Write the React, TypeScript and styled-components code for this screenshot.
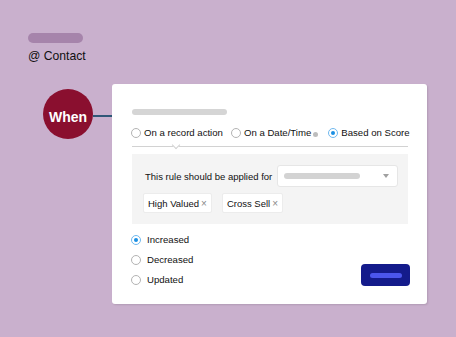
import React from "react";
import styled, { createGlobalStyle } from "styled-components";

const Global = createGlobalStyle`
  html, body { margin: 0; padding: 0; background: #c9b0cd; }
  body { font-family: "Liberation Sans", Arial, sans-serif; color: #111; }
`;

const Page = styled.div`
  width: 456px;
  height: 337px;
  box-sizing: border-box;
  padding: 33px 28px 0 28px;
  background: #c9b0cd;
`;

const Header = styled.div`
  display: flex;
  flex-direction: column;
  align-items: flex-start;
`;

const Pill = styled.div`
  width: 55px;
  height: 10px;
  border-radius: 5px;
  background: #a684ab;
`;

const Label = styled.div`
  margin-top: 6px;
  font-size: 12.2px;
  line-height: 14px;
  color: #111;
`;

const FlowRow = styled.div`
  display: flex;
  align-items: flex-start;
  margin-top: 21px;
  padding-left: 15px;
`;

const Trigger = styled.div`
  width: 50px;
  height: 50px;
  margin-top: 5px;
  border-radius: 50%;
  background: #8a0f2f;
  color: #fff;
  font-weight: 700;
  font-size: 14px;
  display: flex;
  align-items: center;
  justify-content: center;
  box-sizing: border-box;
  padding-top: 6px;
  flex: none;
`;

const Connector = styled.div`
  width: 19px;
  height: 2px;
  margin-top: 31px;
  background: #2f5777;
  flex: none;
`;

const Card = styled.div`
  width: 315px;
  height: 220px;
  box-sizing: border-box;
  background: #fff;
  border-radius: 3px;
  box-shadow: 1px 1px 2px rgba(0, 0, 0, 0.12);
  padding: 25px 19px 0 20px;
  display: flex;
  flex-direction: column;
`;

const TitleBar = styled.div`
  width: 95px;
  height: 6px;
  border-radius: 3px;
  background: #d5d5d5;
`;

const ModeRow = styled.div`
  display: flex;
  align-items: center;
  height: 14px;
  margin-top: 11px;
  margin-left: -1px;
  gap: 8px;
`;

const Option = styled.label<{ $gap?: number }>`
  display: flex;
  align-items: center;
  gap: ${(p) => p.$gap ?? 3}px;
  font-size: 9.6px;
  line-height: 12px;
  color: #111;
  white-space: nowrap;
`;

const Radio = styled.span<{ $on?: boolean }>`
  width: 10px;
  height: 10px;
  box-sizing: border-box;
  border-radius: 50%;
  border: 1px solid ${(p) => (p.$on ? "#6fb8ee" : "#b3b3b3")};
  background: #fff;
  display: flex;
  align-items: center;
  justify-content: center;
  flex: none;
  &::after {
    content: "";
    width: 4px;
    height: 4px;
    border-radius: 50%;
    background: #1a8fe3;
    display: ${(p) => (p.$on ? "block" : "none")};
  }
`;

const InfoDot = styled.span`
  width: 5px;
  height: 5px;
  border-radius: 50%;
  background: #bdbdbd;
  margin-left: -1px;
  margin-right: 2px;
  margin-top: 3px;
  flex: none;
`;

const Divider = styled.div`
  position: relative;
  height: 1px;
  margin-top: 6px;
  background: #d2d2d2;
  &::after {
    content: "";
    position: absolute;
    left: 41px;
    top: -4px;
    width: 5px;
    height: 5px;
    background: #fff;
    border-right: 1px solid #d2d2d2;
    border-bottom: 1px solid #d2d2d2;
    transform: rotate(45deg);
  }
`;

const Panel = styled.div`
  margin-top: 7px;
  height: 70px;
  box-sizing: border-box;
  background: #f4f4f4;
  padding: 11px 10px 0 11px;
  display: flex;
  flex-direction: column;
  gap: 6px;
`;

const RuleRow = styled.div`
  display: flex;
  align-items: center;
  justify-content: space-between;
`;

const RuleText = styled.span`
  font-size: 9.5px;
  color: #111;
  padding-left: 2px;
`;

const Select = styled.div`
  width: 121px;
  height: 22px;
  box-sizing: border-box;
  background: #fff;
  border: 1px solid #e6e6e6;
  border-radius: 3px;
  display: flex;
  align-items: center;
  justify-content: space-between;
  padding: 0 8px 0 6px;
`;

const SelectBar = styled.div`
  width: 76px;
  height: 6px;
  border-radius: 3px;
  background: #d3d3d3;
`;

const Caret = styled.div`
  width: 0;
  height: 0;
  border-left: 3.5px solid transparent;
  border-right: 3.5px solid transparent;
  border-top: 4px solid #a0a0a0;
`;

const TagRow = styled.div`
  display: flex;
  gap: 10px;
`;

const Tag = styled.div`
  height: 20px;
  box-sizing: border-box;
  background: #fff;
  border: 1px solid #ececec;
  border-radius: 2px;
  display: flex;
  align-items: center;
  padding: 0 4px 0 4px;
  font-size: 9.5px;
  color: #111;
`;

const Remove = styled.span`
  margin-left: 2px;
  font-size: 10px;
  color: #8a8a8a;
`;

const Bottom = styled.div`
  display: flex;
  justify-content: space-between;
  align-items: flex-end;
  margin-top: 6px;
`;

const ChangeList = styled.div`
  display: flex;
  flex-direction: column;
  margin-left: -1px;
`;

const ChangeRow = styled.div`
  height: 20px;
  display: flex;
  align-items: center;
`;

const Button = styled.button`
  width: 49px;
  height: 22px;
  margin: 0 -2px 4px 0;
  border: none;
  border-radius: 4px;
  background: #141b8b;
  display: flex;
  align-items: center;
  justify-content: center;
  padding: 0;
  cursor: pointer;
`;

const ButtonBar = styled.span`
  width: 32px;
  height: 5px;
  border-radius: 3px;
  background: #4b56ec;
`;

export default function App() {
  return (
    <>
      <Global />
      <Page>
        <Header>
          <Pill />
          <Label>@ Contact</Label>
        </Header>
        <FlowRow>
          <Trigger>When</Trigger>
          <Connector />
          <Card>
            <TitleBar />
            <ModeRow>
              <Option>
                <Radio />
                On a record action
              </Option>
              <Option>
                <Radio />
                On a Date/Time
                <InfoDot />
              </Option>
              <Option>
                <Radio $on />
                Based on Score
              </Option>
            </ModeRow>
            <Divider />
            <Panel>
              <RuleRow>
                <RuleText>This rule should be applied for</RuleText>
                <Select>
                  <SelectBar />
                  <Caret />
                </Select>
              </RuleRow>
              <TagRow>
                <Tag>
                  High Valued<Remove>×</Remove>
                </Tag>
                <Tag>
                  Cross Sell<Remove>×</Remove>
                </Tag>
              </TagRow>
            </Panel>
            <Bottom>
              <ChangeList>
                <ChangeRow>
                  <Option $gap={6}>
                    <Radio $on />
                    Increased
                  </Option>
                </ChangeRow>
                <ChangeRow>
                  <Option $gap={6}>
                    <Radio />
                    Decreased
                  </Option>
                </ChangeRow>
                <ChangeRow>
                  <Option $gap={6}>
                    <Radio />
                    Updated
                  </Option>
                </ChangeRow>
              </ChangeList>
              <Button>
                <ButtonBar />
              </Button>
            </Bottom>
          </Card>
        </FlowRow>
      </Page>
    </>
  );
}
